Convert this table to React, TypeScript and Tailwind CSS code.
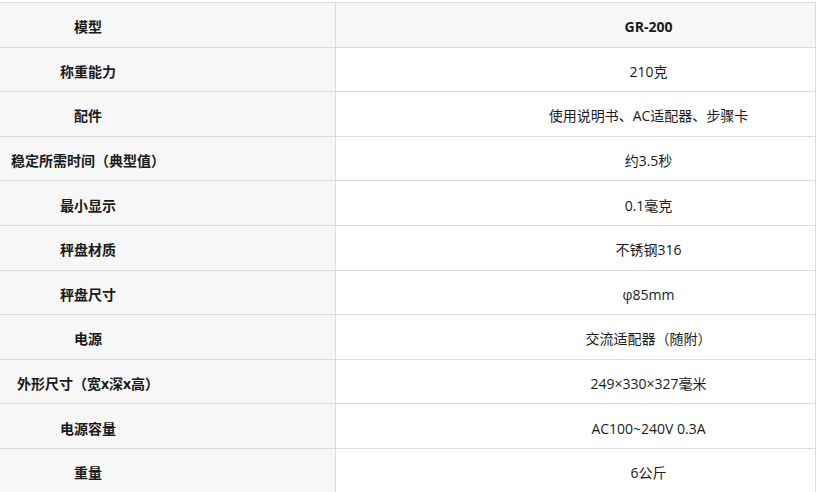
const SPECS: [string, string][] = [
  ['称重能力', '210克'],
  ['配件', '使用说明书、AC适配器、步骤卡'],
  ['稳定所需时间（典型值）', '约3.5秒'],
  ['最小显示', '0.1毫克'],
  ['秤盘材质', '不锈钢316'],
  ['秤盘尺寸', 'φ85mm'],
  ['电源', '交流适配器（随附）'],
  ['外形尺寸（宽x深x高）', '249×330×327毫米'],
  ['电源容量', 'AC100~240V 0.3A'],
  ['重量', '6公斤'],
];

function Row({ label, value, head }: { label: string; value: string; head?: boolean }) {
  return (
    <div className="grid grid-cols-[336px_480px] h-[44.6px] border-b border-[#dcdcdc]">
      <div className="flex items-center bg-[#f7f7f7] border-r border-[#dcdcdc] pt-[5px]">
        <div className="w-[176px] text-center font-bold">{label}</div>
      </div>
      <div
        className={`flex items-center border-r border-[#dcdcdc] pt-[5px] pl-[146px] justify-center ${
          head ? 'bg-[#f7f7f7] font-bold' : 'bg-white'
        }`}
      >
        {value}
      </div>
    </div>
  );
}

export default function App() {
  return (
    <div className="w-[818px] h-[492px] overflow-hidden bg-white pt-[2px]">
      <div
        className="w-[816px] border-t border-[#dcdcdc] text-[14px] text-[#1a1a1a] leading-none"
        style={{ fontFamily: '"Open Sans", "Noto Sans CJK SC", sans-serif' }}
      >
        <Row label="模型" value="GR-200" head />
        {SPECS.map(([label, value]) => (
          <Row key={label} label={label} value={value} />
        ))}
      </div>
    </div>
  );
}
